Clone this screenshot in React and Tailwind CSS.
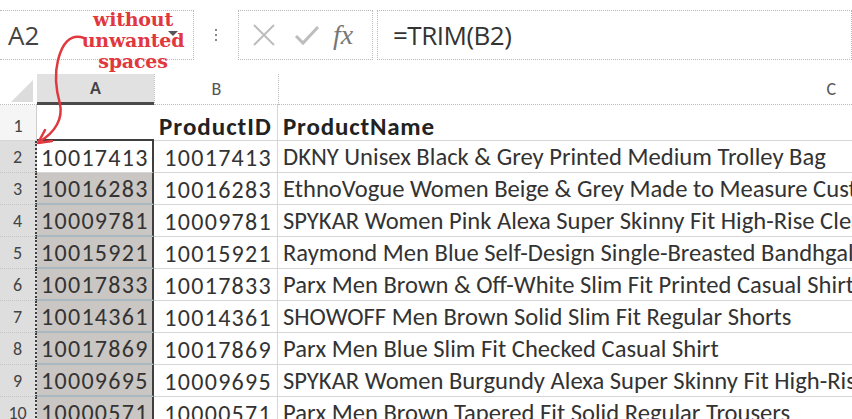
const rows = [
  ["10017413", "DKNY Unisex Black & Grey Printed Medium Trolley Bag"],
  ["10016283", "EthnoVogue Women Beige & Grey Made to Measure Custom Kurta Set"],
  ["10009781", "SPYKAR Women Pink Alexa Super Skinny Fit High-Rise Clean Look Jeans"],
  ["10015921", "Raymond Men Blue Self-Design Single-Breasted Bandhgala Suit"],
  ["10017833", "Parx Men Brown & Off-White Slim Fit Printed Casual Shirt"],
  ["10014361", "SHOWOFF Men Brown Solid Slim Fit Regular Shorts"],
  ["10017869", "Parx Men Blue Slim Fit Checked Casual Shirt"],
  ["10009695", "SPYKAR Women Burgundy Alexa Super Skinny Fit High-Rise Jeans"],
  ["10000571", "Parx Men Brown Tapered Fit Solid Regular Trousers"],
];

const cellFont = { fontFamily: "Carlito, Lato, 'Open Sans', sans-serif" };

function Toolbar() {
  return (
    <div className="flex h-[74px] pt-[10px] items-start">
      <div className="relative flex items-center h-[50px] w-[194px] border-y border-r border-dotted border-[#b9b9b9] pl-[8px] text-[26px] text-[#444] font-['Open_Sans',sans-serif]">
        A2
        <span className="absolute left-[168px] top-[20px] w-0 h-0 border-x-[5px] border-x-transparent border-t-[5px] border-t-[#555]" />
      </div>
      <div className="w-[44px] h-[50px] flex flex-col items-center justify-center gap-[3px]">
        <span className="w-[2px] h-[2px] bg-[#888]" />
        <span className="w-[2px] h-[2px] bg-[#888]" />
        <span className="w-[2px] h-[2px] bg-[#888]" />
      </div>
      <div className="flex items-center h-[50px] w-[135px] border border-dotted border-[#b9b9b9]">
        <svg width="26" height="26" viewBox="0 0 26 26" className="ml-[12px]">
          <path d="M3 3 L23 23 M23 3 L3 23" stroke="#bdbdbd" strokeWidth="2" fill="none" />
        </svg>
        <svg width="26" height="22" viewBox="0 0 26 22" className="ml-[17px]">
          <path d="M2 12 L9 19 L24 3" stroke="#bdbdbd" strokeWidth="3" fill="none" />
        </svg>
        <span className="ml-[13px] text-[28px] italic text-[#777] font-['Liberation_Serif',serif] leading-none">fx</span>
      </div>
      <div className="ml-[4px] flex-1 flex items-center h-[50px] border border-dotted border-[#b9b9b9] pl-[15px] text-[26px] text-[#333] font-['Open_Sans',sans-serif] tracking-[-0.5px]">
        =TRIM(B2)
      </div>
    </div>
  );
}

function Annotation() {
  return (
    <>
      <div className="absolute left-[83px] top-[9px] w-[100px] flex flex-col items-center text-[19px] leading-[21px] font-bold text-[#e0383e] font-['DejaVu_Serif',serif] tracking-[-0.2px]">
        <div className="h-[21px]">without</div>
        <div className="h-[21px]">unwanted</div>
        <div className="h-[21px]">spaces</div>
      </div>
      <svg className="absolute left-0 top-0" width="120" height="160" viewBox="0 0 120 160">
        <path
          d="M84 38 C70 33 62 44 58 60 C54 76 56 90 60 104 C63 118 56 132 39 142"
          stroke="#e0383e"
          strokeWidth="2.5"
          fill="none"
          strokeLinecap="round"
        />
        <path d="M45 130 L38 143 L52 141" stroke="#e0383e" strokeWidth="2.5" fill="none" strokeLinecap="round" strokeLinejoin="round" />
      </svg>
    </>
  );
}

export default function App() {
  return (
    <div className="relative w-[852px] h-[419px] overflow-hidden bg-white text-[#333]">
      <Toolbar />

      <div className="grid grid-cols-[37px_117px_124px_1fr] grid-rows-[31px_36px_repeat(9,32px)]" style={cellFont}>
        {/* header row */}
        <div className="relative border-b border-dotted border-[#bbb] bg-white">
          <span className="absolute right-[4px] bottom-[2px] w-0 h-0 border-l-[22px] border-l-transparent border-b-[22px] border-b-[#dcdcdc]" />
        </div>
        <div className="flex items-center justify-center bg-[#e1e1e1] border-b-[3px] border-[#4a4a4a] text-[18px] font-bold text-[#444]">
          A
        </div>
        <div className="flex items-center justify-center border-b border-l border-dotted border-[#bbb] text-[18px] text-[#555]">
          B
        </div>
        <div className="flex items-center justify-end pr-[16px] border-b border-l border-dotted border-[#bbb] text-[18px] text-[#555]">
          C
        </div>

        {/* row 1 */}
        <div className="flex items-center justify-center pt-[8px] bg-[#f5f5f5] border-b border-[#d6d6d6] border-r border-r-[#cfcfcf] text-[18px] text-[#444]">
          1
        </div>
        <div className="border-b-2 border-[#3f3f3f] bg-white" />
        <div className="flex items-center pt-[8px] pl-[5px] border-b border-r border-[#d6d6d6] text-[25px] font-bold text-[#222] tracking-[1px] whitespace-nowrap overflow-hidden">
          ProductID
        </div>
        <div className="flex items-center pt-[8px] pl-[5px] border-b border-[#d6d6d6] text-[25px] font-bold text-[#222] tracking-[0.8px]">
          ProductName
        </div>

        {rows.map(([id, name], i) => (
          <Row key={id} n={i + 2} id={id} name={name} first={i === 0} />
        ))}
      </div>

      <Annotation />
    </div>
  );
}

function Row({ n, id, name, first }) {
  return (
    <>
      <div className="flex items-center justify-center pt-[2px] bg-[#dedede] border-b border-dotted border-[#c4c4c4] border-r-2 border-r-[#3f3f3f] text-[18px] text-[#444]">
        {n}
      </div>
      <div
        className={
          "flex items-center pt-[2px] pl-[4px] border-r-2 border-r-[#3f3f3f] text-[24px] tracking-[1.3px] text-[#333] " +
          (first ? "bg-white border-b border-b-[#d6d6d6]" : "bg-[#c9c6c3] border-b-2 border-b-[#aab8c0]")
        }
      >
        {id}
      </div>
      <div className="flex items-center justify-end pt-[2px] pr-[5px] border-b border-r border-[#d6d6d6] text-[24px] tracking-[1.3px] text-[#333]">
        {id}
      </div>
      <div className="flex items-center pt-[2px] pl-[5px] border-b border-[#d6d6d6] text-[24.6px] text-[#333] whitespace-nowrap overflow-hidden">
        {name}
      </div>
    </>
  );
}
